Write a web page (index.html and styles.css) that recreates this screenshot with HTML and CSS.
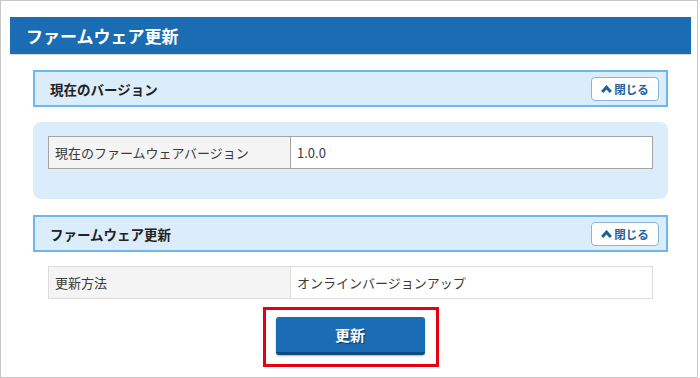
FILE: index.html
```html
<!DOCTYPE html>
<html lang="ja">
<head>
    <meta charset="UTF-8">
    <meta name="viewport" content="width=device-width, initial-scale=1.0">
    <link rel="stylesheet" href="styles.css">
    <title>ファームウェア更新</title>
</head>
<body>
<div class="frame">
    <h1 class="page-title">ファームウェア更新</h1>
    <div class="content">
        <div class="section-head">
            <h2>現在のバージョン</h2>
            <button class="close-btn" type="button">
                <svg class="chevron" width="11" height="8" viewBox="0 0 11 8"><polyline points="1.2,7 5.5,2.2 9.8,7" fill="none" stroke="#1a5f9e" stroke-width="3"/></svg>閉じる
            </button>
        </div>
        <div class="panel">
            <div class="info">
                <div class="info-label">現在のファームウェアバージョン</div>
                <div class="info-value">1.0.0</div>
            </div>
        </div>

        <div class="section-head section-gap">
            <h2>ファームウェア更新</h2>
            <button class="close-btn" type="button">
                <svg class="chevron" width="11" height="8" viewBox="0 0 11 8"><polyline points="1.2,7 5.5,2.2 9.8,7" fill="none" stroke="#1a5f9e" stroke-width="3"/></svg>閉じる
            </button>
        </div>
        <div class="plain">
            <div class="info light">
                <div class="info-label">更新方法</div>
                <div class="info-value">オンラインバージョンアップ</div>
            </div>
        </div>

        <div class="actions">
            <div class="highlight">
                <button class="update-btn" type="button">更新</button>
            </div>
        </div>
    </div>
</div>
</body>
</html>
```

FILE: styles.css
```css
body {
    margin: 0;
    background: #fff;
    font-family: "Noto Sans CJK JP", "Noto Sans", sans-serif;
    color: #333;
}

.frame {
    width: 698px;
    height: 378px;
    box-sizing: border-box;
    border: 1px solid #c8c8c8;
    padding: 16px 6px 0 9px;
}

.page-title {
    margin: 0;
    height: 37px;
    line-height: 37px;
    padding-left: 16px;
    background: #1a6db3;
    color: #fff;
    font-size: 17px;
    font-weight: bold;
    box-shadow: 0 1px 1px rgba(0, 0, 0, 0.15);
}

.content {
    padding: 16px 23px 0;
}

/* section header bars */
.section-head {
    display: flex;
    align-items: center;
    justify-content: space-between;
    height: 37px;
    box-sizing: border-box;
    border: 2px solid #6db6ef;
    background: #dbecfb;
    padding: 0 7px 0 15px;
}
.section-gap {
    margin-top: 16px;
}
.section-head h2 {
    margin: 0;
    font-size: 13.5px;
    font-weight: bold;
    color: #222;
}

.close-btn {
    display: flex;
    align-items: center;
    justify-content: center;
    gap: 2px;
    width: 68px;
    height: 24px;
    padding: 0;
    background: #fff;
    border: 1px solid #86b5de;
    border-radius: 4px;
    color: #1a5f9e;
    font-family: inherit;
    font-size: 11.5px;
    font-weight: bold;
}

.panel {
    margin-top: 15px;
    background: #dbecfb;
    border-radius: 8px;
    padding: 14px 15px 30px;
}

.plain {
    padding: 14px 15px 0;
}

/* label / value rows */
.info {
    display: grid;
    grid-template-columns: 242px 1fr;
    height: 33px;
    box-sizing: border-box;
    border: 1px solid #a4a4a4;
    font-size: 13px;
    color: #3a3a3a;
}
.info.light {
    border-color: #dcdcdc;
}
.info-label {
    display: flex;
    align-items: center;
    padding-left: 6px;
    background: #f4f4f4;
    border-right: 1px solid #a4a4a4;
}
.info.light .info-label {
    border-right-color: #dcdcdc;
}
.info-value {
    display: flex;
    align-items: center;
    padding-left: 6px;
    background: #fff;
}

.actions {
    display: flex;
    justify-content: center;
    margin-top: 8px;
}
.highlight {
    border: 3px solid #e60012;
    padding: 7px 11px 9px 10px;
}
.update-btn {
    width: 149px;
    height: 38px;
    background: #1a6db3;
    border: none;
    border-bottom: 3px solid #0f4a7e;
    border-radius: 3px;
    color: #fff;
    font-family: inherit;
    font-size: 15px;
    font-weight: bold;
    text-shadow: 1px 1px 1px rgba(0, 0, 0, 0.5);
    box-shadow: 0 1px 2px rgba(0, 0, 0, 0.3);
}
```
